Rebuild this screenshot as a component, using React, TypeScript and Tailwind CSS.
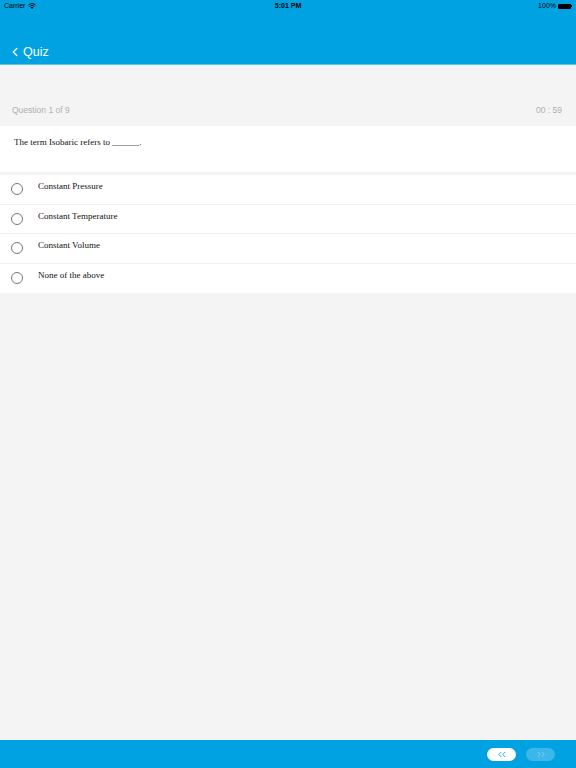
import { ChevronLeft } from 'lucide-react';

const OPTIONS = ['Constant Pressure', 'Constant Temperature', 'Constant Volume', 'None of the above'];

function DoubleChevron({ dir, color }: { dir: 'left' | 'right'; color: string }) {
  const d =
    dir === 'left'
      ? 'M4 1 L1.5 3.5 L4 6 M8 1 L5.5 3.5 L8 6'
      : 'M1.5 1 L4 3.5 L1.5 6 M5.5 1 L8 3.5 L5.5 6';
  return (
    <svg width="10" height="7" viewBox="0 0 9.5 7">
      <path d={d} stroke={color} strokeWidth="0.9" fill="none" />
    </svg>
  );
}

export default function App() {
  return (
    <div className="flex flex-col h-[768px] w-[576px] bg-[#f4f4f4] font-['Liberation_Sans',Arial,sans-serif] overflow-hidden">
      {/* Status bar */}
      <div className="bg-[#00a2e2] h-[20px] px-[4px] pt-[2px] flex items-start justify-between text-[7px] leading-[8px] text-black">
        <div className="flex items-center gap-[3px] w-[100px]">
          <span>Carrier</span>
          <svg width="8" height="6" viewBox="0 0 8 6">
            <path d="M4 6 L2.6 4.5 A2 2 0 0 1 5.4 4.5 Z" fill="black" />
            <path d="M1.6 3.4 A3.4 3.4 0 0 1 6.4 3.4" stroke="black" strokeWidth="0.9" fill="none" />
            <path d="M0.4 2.1 A5 5 0 0 1 7.6 2.1" stroke="black" strokeWidth="0.9" fill="none" />
          </svg>
        </div>
        <span className="font-semibold">5:01 PM</span>
        <div className="flex items-center justify-end gap-[2px] w-[100px]">
          <span>100%</span>
          <div className="flex items-center">
            <div className="w-[13px] h-[5px] bg-black rounded-[1px]" />
            <div className="w-[1px] h-[2px] bg-black" />
          </div>
        </div>
      </div>

      {/* Nav bar */}
      <div className="bg-[#00a2e2] h-[45px] flex items-end pl-[8px] pb-[4px] border-b border-[#5cc3ec]">
        <ChevronLeft className="text-white mb-[1px]" size={14} strokeWidth={2.5} />
        <span className="text-white text-[12.5px] ml-[1px] leading-[16px]">Quiz</span>
      </div>

      {/* Question header */}
      <div className="h-[61px] flex items-end justify-between px-[12px] pb-[11px] text-[8.5px] leading-[10px] text-[#b0b0b0]">
        <span>Question 1 of 9</span>
        <span className="pr-[2px]">00 : 59</span>
      </div>

      {/* Question text */}
      <div className="bg-white h-[46px] px-[14px] pt-[10px] text-[9px] text-[#111] font-['Liberation_Serif','Times_New_Roman',serif]">
        The term Isobaric refers to ______.
      </div>

      {/* Options */}
      <div className="mt-[3px] bg-white flex flex-col">
        {OPTIONS.map((opt, i) => (
          <div
            key={opt}
            className={`h-[29.5px] flex items-start pl-[11px] ${i < OPTIONS.length - 1 ? 'border-b border-[#f0f0f0]' : ''}`}
          >
            <div className="mt-[8px] w-[12px] h-[12px] rounded-full border border-[#777]" />
            <span className="ml-[15px] mt-[5px] text-[9px] text-[#111] font-['Liberation_Serif','Times_New_Roman',serif]">
              {opt}
            </span>
          </div>
        ))}
      </div>

      <div className="flex-1" />

      {/* Bottom bar */}
      <div className="bg-[#00a2e2] h-[28px] flex items-center justify-end gap-[10px] pr-[21px]">
        <button className="w-[29px] h-[13px] rounded-full bg-white flex items-center justify-center">
          <DoubleChevron dir="left" color="#00a2e2" />
        </button>
        <button className="w-[29px] h-[13px] rounded-full bg-[#3db7ea] flex items-center justify-center">
          <DoubleChevron dir="right" color="#7fd0f2" />
        </button>
      </div>
    </div>
  );
}
